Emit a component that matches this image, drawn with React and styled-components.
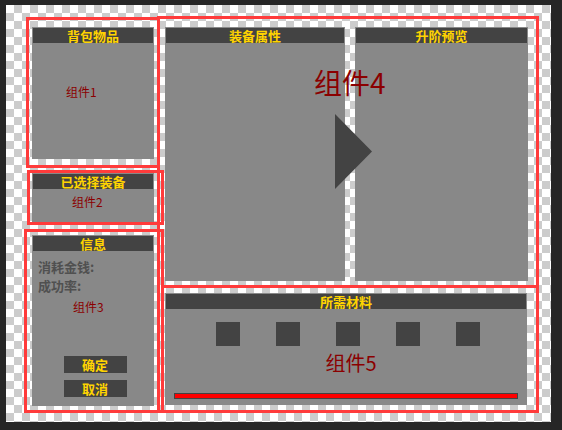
import React from "react";
import styled, { createGlobalStyle } from "styled-components";

const GlobalStyle = createGlobalStyle`
  html, body {
    margin: 0;
    padding: 0;
    background: #262626;
  }
  body {
    font-family: "Noto Sans CJK SC", "DejaVu Sans", sans-serif;
  }
`;

const Frame = styled.div`
  margin: 5px 0 0 6px;
  width: 545px;
  height: 417px;
  box-sizing: border-box;
  padding: 11px 0 0 18px;
  display: flex;
  align-items: flex-start;
  background-color: #ffffff;
  background-image:
    linear-gradient(45deg, #cccccc 25%, transparent 25%, transparent 75%, #cccccc 75%),
    linear-gradient(45deg, #cccccc 25%, transparent 25%, transparent 75%, #cccccc 75%);
  background-size: 16px 16px;
  background-position: 0 0, 8px 8px;
`;

const LeftCol = styled.div`
  width: 140px;
  display: flex;
  flex-direction: column;
`;

const RedBox = styled.div`
  box-sizing: border-box;
  border: 3px solid #ff3b3b;
  display: flex;
  flex-direction: column;
  width: ${(p) => p.$w}px;
  height: ${(p) => p.$h}px;
  margin: ${(p) => p.$m || "0"};
  padding: ${(p) => p.$p || "0"};
`;

const RightCol = styled.div`
  box-sizing: border-box;
  margin-left: -7px;
  width: 382px;
  height: 397px;
  border: 3px solid #ff3b3b;
  display: flex;
  flex-direction: column;
`;

const TopArea = styled.div`
  position: relative;
  display: flex;
  gap: 10px;
  padding: 8px 0 4px 5px;
  height: 266px;
  box-sizing: border-box;
`;

const MatBox = styled.div`
  box-sizing: border-box;
  flex: 1;
  margin: 0 -3px -3px 1px;
  border: 3px solid #ff3b3b;
  padding: 5px 9px 5px 1px;
  display: flex;
  flex-direction: column;
`;

const Panel = styled.div`
  box-sizing: border-box;
  background: #888888;
  padding: 1px;
  display: flex;
  flex-direction: column;
  width: ${(p) => (p.$w ? `${p.$w}px` : "auto")};
  flex: ${(p) => (p.$w ? "none" : "1")};
`;

const Header = styled.div`
  height: 15px;
  background: #434343;
  color: #ffd400;
  font-weight: 700;
  font-size: 13px;
  line-height: 15px;
  text-align: center;
  flex-shrink: 0;
`;

const Label = styled.div`
  color: #8b0000;
  font-size: ${(p) => p.$size || 12}px;
  line-height: 1.2;
  margin: ${(p) => p.$m || "0"};
`;

const InfoLine = styled.div`
  color: #505050;
  font-weight: 700;
  font-size: 13px;
  line-height: 19px;
  margin-left: 5px;
`;

const InfoBody = styled.div`
  display: flex;
  flex-direction: column;
  flex: 1;
  padding-top: 6px;
`;

const Buttons = styled.div`
  margin-top: auto;
  margin-bottom: 8px;
  display: flex;
  flex-direction: column;
  align-items: center;
  gap: 7px;
`;

const Button = styled.button`
  width: 63px;
  height: 17px;
  border: none;
  padding: 0;
  margin-left: 4px;
  background: #434343;
  color: #ffd400;
  font-family: inherit;
  font-weight: 700;
  font-size: 13px;
  line-height: 17px;
`;

const Arrow = styled.svg`
  position: absolute;
  left: 175px;
  top: 95px;
`;

const BigLabel = styled.div`
  position: absolute;
  left: 154px;
  top: 46px;
  color: #8b0000;
  font-size: 28px;
  line-height: 34px;
`;

const Slots = styled.div`
  display: flex;
  justify-content: center;
  gap: 36px;
  margin: 13px 0 0 4px;
`;

const Slot = styled.div`
  width: 24px;
  height: 24px;
  background: #434343;
`;

const Progress = styled.div`
  margin: auto 8px 5px 8px;
  height: 6px;
  box-sizing: border-box;
  border: 1px solid #434343;
  background: #ff0000;
`;

const MatLabel = styled(Label)`
  text-align: center;
  padding-left: 10px;
`;

export default function App() {
  return (
    <>
      <GlobalStyle />
      <Frame>
        <LeftCol>
          <RedBox $w={134} $h={151} $m="1px 0 0 2px" $p="7px 3px 6px 3px">
            <Panel>
              <Header>背包物品</Header>
              <Label $m="42px 0 0 33px">组件1</Label>
            </Panel>
          </RedBox>
          <RedBox $w={137} $h={55} $m="2px 0 0 3px" $p="0 7px 0 2px">
            <Panel>
              <Header>已选择装备</Header>
              <Label $m="6px 0 0 39px">组件2</Label>
            </Panel>
          </RedBox>
          <RedBox $w={140} $h={184} $m="4px 0 0 0" $p="3px 7px 4px 5px">
            <Panel>
              <Header>信息</Header>
              <InfoBody>
                <InfoLine>消耗金钱:</InfoLine>
                <InfoLine>成功率:</InfoLine>
                <Label $m="5px 0 0 40px">组件3</Label>
                <Buttons>
                  <Button>确定</Button>
                  <Button>取消</Button>
                </Buttons>
              </InfoBody>
            </Panel>
          </RedBox>
        </LeftCol>
        <RightCol>
          <TopArea>
            <Panel $w={180}>
              <Header>装备属性</Header>
            </Panel>
            <Panel $w={173}>
              <Header>升阶预览</Header>
            </Panel>
            <BigLabel>组件4</BigLabel>
            <Arrow width="37" height="75" viewBox="0 0 37 75">
              <polygon points="0,0 37,37.5 0,75" fill="#434343" />
            </Arrow>
          </TopArea>
          <MatBox>
            <Panel>
              <Header>所需材料</Header>
              <Slots>
                <Slot />
                <Slot />
                <Slot />
                <Slot />
                <Slot />
              </Slots>
              <MatLabel $size={20} $m="5px 0 0 0">组件5</MatLabel>
              <Progress />
            </Panel>
          </MatBox>
        </RightCol>
      </Frame>
    </>
  );
}
